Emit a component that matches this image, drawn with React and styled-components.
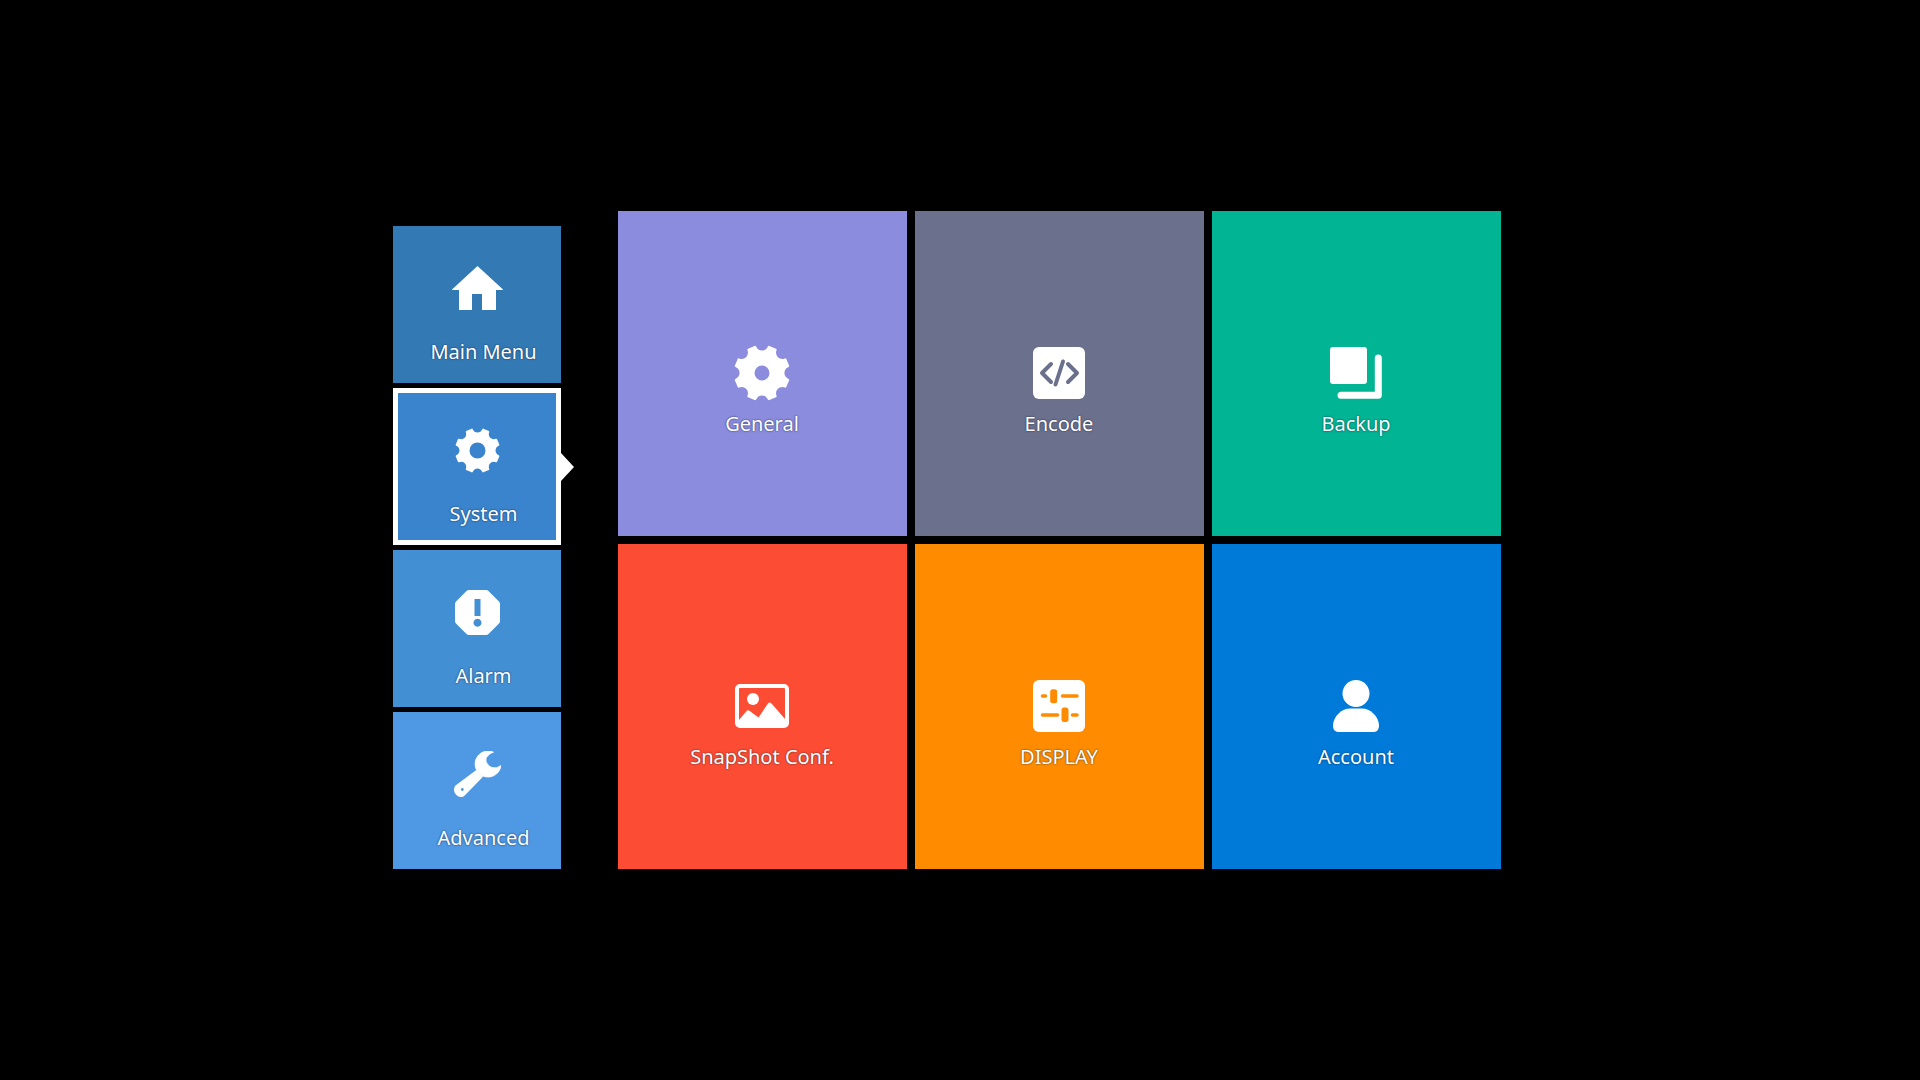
import React from "react";
import styled, { createGlobalStyle } from "styled-components";

const GlobalStyle = createGlobalStyle`
  html, body {
    margin: 0;
    padding: 0;
    background: #000;
  }
  * {
    box-sizing: border-box;
  }
`;

const Page = styled.div`
  width: 1920px;
  height: 1080px;
  background: #000;
  overflow: hidden;
  display: flex;
  align-items: flex-start;
  padding: 211px 0 0 393px;
  font-family: "Noto Sans", "Open Sans", sans-serif;
  color: #fff;
`;

const Sidebar = styled.nav`
  width: 168px;
  margin-top: 15px;
  margin-right: 57px;
  display: flex;
  flex-direction: column;
  gap: 5px;
`;

const SideItem = styled.div`
  position: relative;
  height: 157px;
  padding-top: 39px;
  background: ${(p) => p.$bg};
  box-shadow: ${(p) => (p.$active ? "inset 0 0 0 5px #fff" : "none")};
  &::after {
    content: ${(p) => (p.$active ? '""' : "none")};
    position: absolute;
    left: 100%;
    top: 65px;
    width: 13px;
    height: 28px;
    background: #fff;
    clip-path: polygon(0 0, 100% 50%, 0 100%);
  }
`;

const SideIcon = styled.div`
  height: 47px;
  display: flex;
  align-items: center;
  justify-content: center;
`;

const Label = styled.div`
  font-size: 20px;
  font-weight: 400;
  line-height: 26px;
  text-align: center;
  white-space: nowrap;
  text-shadow: 0 0 2px rgba(0, 20, 50, 0.8);
`;

const SideLabel = styled(Label)`
  margin-top: 27px;
  padding-left: 13px;
`;

const Grid = styled.main`
  display: grid;
  grid-template-columns: repeat(3, 289px);
  grid-auto-rows: 325px;
  gap: 8px;
`;

const Tile = styled.div`
  background: ${(p) => p.$bg};
  padding: 134px 1px 0 0;
`;

const TileIcon = styled.div`
  height: 56px;
  display: flex;
  align-items: center;
  justify-content: center;
`;

const TileLabel = styled(Label)`
  margin-top: 10px;
`;

// 8 toothed gear with scooped valleys, the hole stays see-through through evenodd
const gearPath = (size, hole) => {
  const c = size / 2;
  const pt = (r, deg) => {
    const a = (deg * Math.PI) / 180;
    return `${(c + r * c * Math.cos(a)).toFixed(2)} ${(c + r * c * Math.sin(a)).toFixed(2)}`;
  };
  let d = `M${pt(0.8, 0)}`;
  for (let i = 0; i < 8; i++) {
    const mid = i * 45 + 22.5;
    d += `Q${pt(0.82, mid - 12)} ${pt(0.97, mid - 10)}`;
    d += `Q${pt(1.02, mid - 9)} ${pt(1, mid - 6)}`;
    d += `L${pt(1, mid + 6)}`;
    d += `Q${pt(1.02, mid + 9)} ${pt(0.97, mid + 10)}`;
    d += `Q${pt(0.82, mid + 12)} ${pt(0.8, mid + 22.5)}`;
  }
  d += "Z";
  d += `M${c - hole} ${c}a${hole} ${hole} 0 1 0 ${hole * 2} 0a${hole} ${hole} 0 1 0 ${-hole * 2} 0Z`;
  return d;
};

const Gear = ({ size, hole }) => (
  <svg width={size} height={size} viewBox={`0 0 ${size} ${size}`}>
    <path d={gearPath(size, hole)} fill="#fff" fillRule="evenodd" />
  </svg>
);

const Home = () => (
  <svg width="51" height="47" viewBox="0 -1 51 47">
    <path
      d="M25.500 0 51 23.500V24H44V44H30V28H20V44H7V24H0V23.500Z"
      fill="#fff"
    />
  </svg>
);

const Alarm = () => (
  <svg width="47" height="47" viewBox="0 0 47 47">
    <path
      d="M15 1H32Q33.500 1 34.500 2L45 12.500Q46 13.500 46 15V32Q46 33.500 45 34.500L34.500 45Q33.500 46 32 46H15Q13.500 46 12.500 45L2 34.500Q1 33.500 1 32V15Q1 13.500 2 12.500L12.500 2Q13.500 1 15 1ZM20.500 10V27H26.500V10ZM23.500 29.700a4 4 0 1 0 .01 0Z"
      fill="#fff"
      fillRule="evenodd"
    />
  </svg>
);

const Wrench = () => (
  <svg width="47" height="47" viewBox="0 0 47 47">
    <path
      d="M39.500 1.200A13 13 0 1 0 47 14.500Q43 18 38 16.500C34 15 31.500 11 32 8 32.500 5.500 35.500 2.500 39.500 1.200Z"
      fill="#fff"
      stroke="#fff"
      strokeWidth="0.8"
      strokeLinejoin="round"
    />
    <path
      d="M22.300 19 1.500 34.500C-0.500 37 -0.500 40.500 1.500 43 4 46.500 8 47 10.700 44.500L29 25.700Z"
      fill="#fff"
    />
    <circle cx="8.300" cy="38.500" r="1.400" fill="#4f98e3" />
  </svg>
);

const Encode = ({ cut }) => (
  <svg width="52" height="52" viewBox="0 0 52 52">
    <rect width="52" height="52" rx="6" fill="#fff" />
    <path
      d="M18 17 9 26 18 35M35 17 44 26 35 35M30 14.500 22.500 37.500"
      fill="none"
      stroke={cut}
      strokeWidth="4"
      strokeLinecap="round"
      strokeLinejoin="round"
    />
  </svg>
);

const Backup = () => (
  <svg width="52" height="52" viewBox="0 0 52 52">
    <rect width="37" height="37" rx="3" fill="#fff" />
    <path
      d="M48.300 11V48.300H11"
      fill="none"
      stroke="#fff"
      strokeWidth="7"
      strokeLinecap="round"
      strokeLinejoin="round"
    />
  </svg>
);

const Snapshot = () => (
  <svg width="54" height="44" viewBox="0 0 54 44">
    <rect x="2" y="2" width="50" height="40" rx="3" fill="none" stroke="#fff" strokeWidth="4" />
    <circle cx="18" cy="15" r="6" fill="#fff" />
    <path
      d="M4 36 12 26.500Q13 25.800 14 26.500L23.500 33.500 33 19.500Q34.700 17.500 36.500 19.500L50 35V42H4Z"
      fill="#fff"
    />
  </svg>
);

const Display = ({ cut }) => (
  <svg width="52" height="52" viewBox="0 0 52 52">
    <rect width="52" height="52" rx="6" fill="#fff" />
    <path
      d="M9.500 16H12.500M29.500 16H44M9.500 35H24.500M39.500 35H44"
      fill="none"
      stroke={cut}
      strokeWidth="3.500"
      strokeLinecap="round"
    />
    <rect x="17.200" y="9.300" width="7" height="14" rx="2.500" fill={cut} />
    <rect x="28.500" y="27.500" width="7" height="14.500" rx="2.500" fill={cut} />
  </svg>
);

const Account = () => (
  <svg width="46" height="52" viewBox="0 0 46 52">
    <circle cx="23" cy="13.500" r="13.500" fill="#fff" />
    <path
      d="M0 45C0.500 36 9 28.500 17 28.500H29C37 28.500 45.500 36 46 45 46.200 49.500 44 52 41 52H5C2 52 -0.200 49.500 0 45Z"
      fill="#fff"
    />
  </svg>
);

const sideItems = [
  { label: "Main Menu", bg: "#337ab5", icon: <Home /> },
  { label: "System", bg: "#3a84cd", active: true, icon: <Gear size={45} hole={8} /> },
  { label: "Alarm", bg: "#438fd4", icon: <Alarm /> },
  { label: "Advanced", bg: "#4f98e3", icon: <Wrench /> },
];

const tiles = [
  { label: "General", bg: "#8b8cdd", icon: <Gear size={56} hole={7.5} /> },
  { label: "Encode", bg: "#6b718d", icon: <Encode cut="#6b718d" /> },
  { label: "Backup", bg: "#00b494", icon: <Backup /> },
  { label: "SnapShot Conf.", bg: "#fc4d34", icon: <Snapshot /> },
  { label: "DISPLAY", bg: "#ff8c00", icon: <Display cut="#ff8c00" /> },
  { label: "Account", bg: "#007ad9", icon: <Account /> },
];

const App = () => (
  <Page>
    <GlobalStyle />
    <Sidebar>
      {sideItems.map((item) => (
        <SideItem key={item.label} $bg={item.bg} $active={item.active}>
          <SideIcon>{item.icon}</SideIcon>
          <SideLabel>{item.label}</SideLabel>
        </SideItem>
      ))}
    </Sidebar>
    <Grid>
      {tiles.map((tile) => (
        <Tile key={tile.label} $bg={tile.bg}>
          <TileIcon>{tile.icon}</TileIcon>
          <TileLabel>{tile.label}</TileLabel>
        </Tile>
      ))}
    </Grid>
  </Page>
);

export default App;
